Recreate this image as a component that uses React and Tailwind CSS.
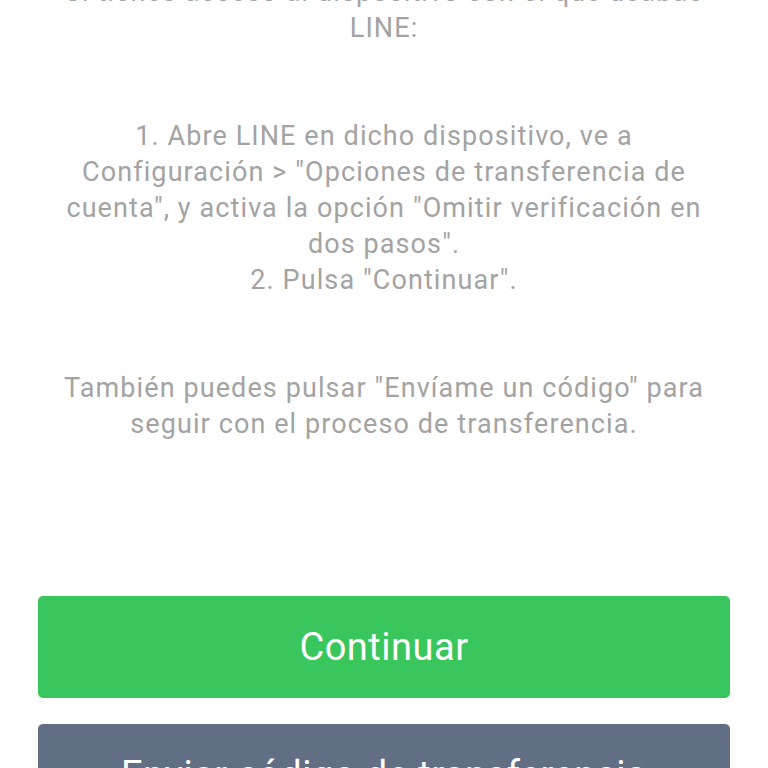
export default function App() {
  const lines = [
    "Si tienes acceso al dispositivo con el que usabas",
    "LINE:",
    "",
    "",
    "1. Abre LINE en dicho dispositivo, ve a",
    "Configuración > \"Opciones de transferencia de",
    "cuenta\", y activa la opción \"Omitir verificación en",
    "dos pasos\".",
    "2. Pulsa \"Continuar\".",
    "",
    "",
    "También puedes pulsar \"Envíame un código\" para",
    "seguir con el proceso de transferencia.",
  ];

  return (
    <div className="h-[768px] w-[768px] overflow-hidden bg-white font-['Roboto','Liberation_Sans',sans-serif]">
      {/* texto explicativo, la primera línea queda cortada arriba */}
      <div className="-mt-[26px] text-center text-[27px] leading-[36px] tracking-[1.1px] text-[#a3a3a3]">
        {lines.map((l, i) => (
          <div key={i} className="h-[36px] whitespace-nowrap">
            {l}
          </div>
        ))}
      </div>

      <div className="mt-[154px] flex flex-col gap-[26px] px-[38px]">
        <button className="flex h-[102px] items-center justify-center rounded-[5px] bg-[#39c65c] text-[38px] tracking-[0.5px] text-white">
          Continuar
        </button>
        <button className="flex h-[102px] items-center justify-center rounded-[5px] bg-[#626e84] text-[38px] tracking-[0.5px] text-white">
          Enviar código de transferencia
        </button>
      </div>
    </div>
  );
}
